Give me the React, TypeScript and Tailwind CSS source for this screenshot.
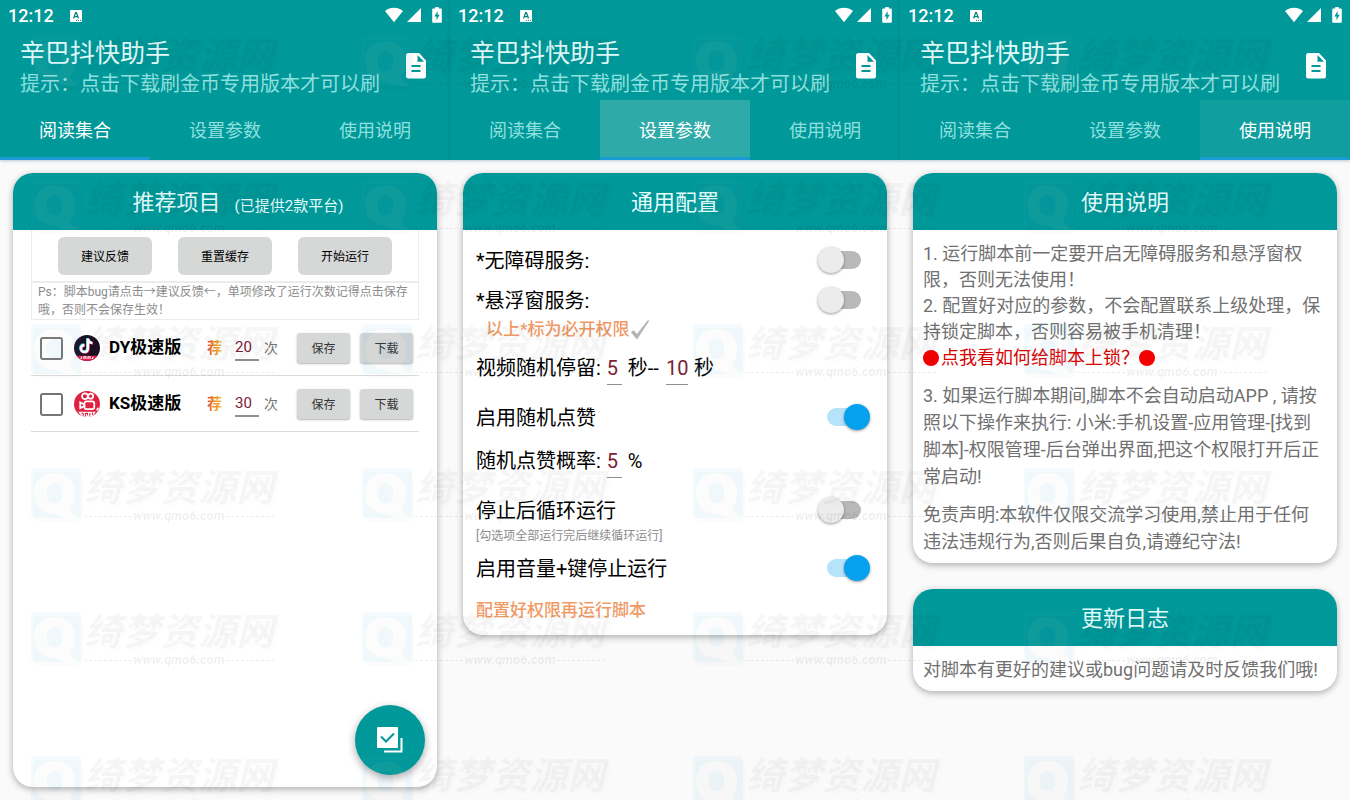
import type { ReactNode } from "react";

const TABS = ["阅读集合", "设置参数", "使用说明"];

function StatusBar() {
  return (
    <div className="flex h-8 items-center pb-px pl-2 pr-2 text-white">
      <span className="text-[18px] font-medium leading-8">12:12</span>
      <svg className="ml-4 h-3 w-3" viewBox="0 0 12 12" aria-hidden="true">
        <rect width="12" height="12" rx="1" fill="#fff" />
        <path d="M3.6 8.4 5.7 2.6h.7l2.1 5.8M4.4 6.6h3.3" fill="none" stroke="#067f80" strokeWidth="1.3" />
        <path d="M6 10.4h1M8 10.4h1M10 10.4h1" stroke="#067f80" strokeWidth="1" />
      </svg>
      <div className="ml-auto flex items-center pb-[2px]">
        <svg className="h-4 w-[18px]" viewBox="0 0 18 16" aria-hidden="true">
          <path d="M0 3.9C5.2-.3 12.800-.3 18 3.900L9 15.200z" fill="#fff" />
        </svg>
        <svg className="ml-1 h-4 w-[14px]" viewBox="0 0 14 16" aria-hidden="true">
          <path d="M14 1v14H0z" fill="#fff" />
        </svg>
        <svg className="ml-[11px] h-4 w-[10px]" viewBox="0 0 10 16" aria-hidden="true">
          <path d="M3.200 0h3.600v1.600H9c.5 0 .8.300.8.8V15c0 .5-.3.8-.8.8H1c-.5 0-.8-.3-.8-.8V2.400c0-.5.3-.8.8-.8h2.200z" fill="#fff" />
          <path d="M5.600 4 2.400 9.400h2.100v3.800L7.700 7.800H5.600z" fill="#009899" />
        </svg>
      </div>
    </div>
  );
}

function AppHeader({ active, tint }: { active: number; tint: string }) {
  return (
    <header className="bg-[#009899] shadow-[0_1px_3px_rgba(0,60,90,0.25)]">
      <StatusBar />
      <div className="flex h-[68px] items-center pl-5 pr-6">
        <div className="min-w-0 flex-1 pt-1">
          <h1 className="text-[25px] font-normal leading-8 text-[#e2fcfb]">辛巴抖快助手</h1>
          <p className="whitespace-nowrap text-[20px] leading-7 text-[#8fe0df]">提示：点击下载刷金币专用版本才可以刷</p>
        </div>
        <button type="button" aria-label="文档" className="shrink-0">
          <svg className="h-[26px] w-5" viewBox="0 0 20 26">
            <path
              fill="#fff"
              fillRule="evenodd"
              d="M2.500 0H13l7 7.500v15.500a2.500 2.500 0 0 1-2.500 2.500h-15A2.500 2.500 0 0 1 0 23V2.500A2.500 2.500 0 0 1 2.500 0zM11.500 2v6.800H18zM5.500 12v2h9v-2zM5.500 17v2h9v-2z"
            />
          </svg>
        </button>
      </div>
      <nav className="grid h-[60px] grid-cols-3">
        {TABS.map((tab, i) => (
          <button
            key={tab}
            type="button"
            className={
              "border-b-[3px] pt-[3px] text-[18px] " +
              (i === active ? "border-[#1a9bd6] text-white " + tint : "border-transparent text-[#8fe0df]")
            }
          >
            {tab}
          </button>
        ))}
      </nav>
    </header>
  );
}

function Card({ title, note, className = "", children }: { title: string; note?: string; className?: string; children: ReactNode }) {
  return (
    <section className={"relative rounded-[20px] bg-white shadow-[0_2px_7px_rgba(0,0,0,0.32)] " + className}>
      <div className="flex h-[57px] items-center justify-center gap-[14px] rounded-t-[20px] bg-[#009899] pt-[2px] text-[#e2fcfb]">
        <h2 className={note ? "pl-[26px] text-[22px] font-normal" : "text-[22px] font-normal"}>{title}</h2>
        {note && <span className="pt-2 text-[15px]">{note}</span>}
      </div>
      {children}
    </section>
  );
}

function DouyinLogo() {
  return (
    <svg className="h-[26px] w-[26px] shrink-0" viewBox="0 0 25 25" aria-hidden="true">
      <clipPath id="dy"><circle cx="12.500" cy="12.500" r="12.500" /></clipPath>
      <g clipPath="url(#dy)">
        <rect width="25" height="25" fill="#1c1024" />
        <path d="M0 20h25v5H0z" fill="#e0244e" />
        <path d="M6.500 23l1-2.200M9.500 23v-2h2v2M13.500 23v-2h2v2M17.500 23l1-2" fill="none" stroke="#fff" strokeWidth="1" />
        <g fill="none" strokeWidth="2.400">
          <path d="M12.800 3v9.500a3.400 3.400 0 1 1-3.400-3.400M12.800 3c.3 2.500 1.800 4 4.300 4.200" stroke="#35d6dc" />
          <path d="M14 4v9.500a3.400 3.400 0 1 1-3.400-3.400M14 4c.3 2.500 1.800 4 4.300 4.200" stroke="#f0375f" />
          <path d="M13.400 3.500V13a3.400 3.400 0 1 1-3.400-3.400M13.400 3.500c.3 2.500 1.800 4 4.300 4.200" stroke="#fff" />
        </g>
      </g>
    </svg>
  );
}

function KuaishouLogo() {
  return (
    <svg className="h-[26px] w-[26px] shrink-0" viewBox="0 0 25 25" aria-hidden="true">
      <clipPath id="ks"><circle cx="12.500" cy="12.500" r="12.500" /></clipPath>
      <g clipPath="url(#ks)">
        <rect width="25" height="25" fill="#e0203f" />
        <g fill="none" stroke="#fff" strokeWidth="1.700">
          <circle cx="10.500" cy="5" r="2.800" />
          <circle cx="16" cy="5" r="2.400" />
          <rect x="10" y="10" width="9.500" height="7.500" rx="2" />
          <path d="m10 13-4-2v5.500l4-2z" />
          <path d="M21.500 18c1 0 1.500-.8 1.500-2" />
        </g>
        <path d="M4 20h17L17 25H8z" fill="#fff" />
        <path d="M7 22l2-1M8.500 24l1-2.500M11 24.500v-3h2v2M15 24l.5-3M17.500 23l.5-2.500" fill="none" stroke="#e0203f" strokeWidth="1" />
      </g>
    </svg>
  );
}

function TaskRow({ logo, name, count }: { logo: ReactNode; name: string; count: string }) {
  return (
    <div className="flex h-14 items-center border-b border-[#dcdcdc] pl-[9px] pr-[6px] pt-px">
      <label className="flex items-center">
        <input
          type="checkbox"
          className="h-[23px] w-[23px] shrink-0 appearance-none rounded-[3px] border-2 border-[#757575] bg-transparent checked:bg-[#009899]"
        />
        <span className="ml-[11px]">{logo}</span>
        <span className="ml-[9px] w-[98px] whitespace-nowrap text-[17px] font-bold text-black">{name}</span>
      </label>
      <span className="bg-gradient-to-r from-[#e8452c] via-[#ee8a22] to-[#eec23a] bg-clip-text text-[15px] font-bold text-transparent">荐</span>
      <input
        type="text"
        aria-label={name + " 次数"}
        defaultValue={count}
        className="ml-[13px] h-[26px] w-6 border-b-2 border-[#8f8f8f] bg-transparent text-[15px] text-[#7d2034] outline-none"
      />
      <span className="ml-[5px] text-[14px] text-[#757575]">次</span>
      <div className="ml-auto flex gap-[10px]">
        {["保存", "下载"].map((label) => (
          <button
            key={label}
            type="button"
            className="h-[30px] w-[53px] rounded-[3px] bg-[#d6d7d7] pt-[2px] text-[12px] text-[#333] shadow-[0_1px_2px_rgba(0,0,0,0.3)]"
          >
            {label}
          </button>
        ))}
      </div>
    </div>
  );
}

function SwitchRow({ label, on = false, className = "" }: { label: string; on?: boolean; className?: string }) {
  return (
    <label className={"flex h-10 items-center justify-between pr-[13px] " + className}>
      <span className="pt-[2px]">{label}</span>
      <input
        type="checkbox"
        role="switch"
        defaultChecked={on}
        className="relative h-[18px] w-[34px] appearance-none rounded-full bg-[#b9b9b9] before:absolute before:-left-[9px] before:-top-1 before:h-[26px] before:w-[26px] before:rounded-full before:bg-[#ececec] before:shadow-[0_1px_3px_rgba(0,0,0,0.4)] checked:bg-[#b5e3fa] checked:before:left-[17px] checked:before:bg-[#06a1ee]"
      />
    </label>
  );
}

function NumberField({ value, label, className }: { value: string; label: string; className: string }) {
  return (
    <input
      type="text"
      aria-label={label}
      defaultValue={value}
      className={"h-[33px] border-b border-[#8f8f8f] bg-transparent text-[20px] text-[#7d2034] outline-none " + className}
    />
  );
}

const Q_SHAPE =
  "M23.500 5C11 5 3 13 3 25.500c0 11.500 7 18.500 17.500 20C28 46.500 31 50 38 50h9l-8.500-8.500C42 38 44 32 44 25.500 44 13 36 5 23.500 5zm0 10c5 0 8 4 8 10.500S28.500 35 23.500 35s-8-3-8-9.500S18.500 15 23.500 15z";

function Watermark() {
  return (
    <div className="flex h-36 w-[331px] shrink-0 pl-[31px] pt-9">
      <svg className="h-[58px] w-[53px] shrink-0" viewBox="0 0 53 58">
        <rect x="2" y="4" width="50" height="50" rx="5" fill="#000" opacity="0.01" />
        <path
          fill="#30b0e8"
          fillRule="evenodd"
          opacity="0.055"
          d={"M4 0h42a4 4 0 0 1 4 4v42a4 4 0 0 1-4 4H4a4 4 0 0 1-4-4V4a4 4 0 0 1 4-4z" + Q_SHAPE}
        />
        <path fill="#fff" fillRule="evenodd" opacity="0.05" d={Q_SHAPE} />
      </svg>
      <div className="w-[190px] text-black/[0.045]">
        <div className="whitespace-nowrap text-[38px] font-bold italic leading-10 [text-shadow:2px_3px_4px_rgba(0,0,0,0.015)]">绮梦资源网</div>
        <div className="flex items-center gap-px text-[13px] font-bold italic leading-4 text-black/[0.07]">
          <span className="flex-1 border-t border-dashed border-black/[0.07]" />
          www.qmo6.com
          <span className="flex-1 border-t border-dashed border-black/[0.07]" />
        </div>
      </div>
    </div>
  );
}

function WatermarkLayer() {
  return (
    <div aria-hidden="true" className="pointer-events-none absolute inset-0 z-20 overflow-hidden">
      {[0, 1, 2, 3, 4, 5].map((row) => (
        <div key={row} className="flex">
          {[0, 1, 2, 3].map((col) => (
            <Watermark key={col} />
          ))}
        </div>
      ))}
    </div>
  );
}

function Screen({ active, tint = "", children }: { active: number; tint?: string; children: ReactNode }) {
  return (
    <div className="flex min-w-0 flex-1 flex-col">
      <AppHeader active={active} tint={tint} />
      <main className="flex flex-1 flex-col px-[13px] pb-[13px] pt-[13px]">{children}</main>
    </div>
  );
}

export default function App() {
  return (
    <div className="relative flex min-h-screen overflow-hidden bg-[#fafafa] font-['Roboto','Noto_Sans_CJK_SC',sans-serif]" lang="zh-CN">
      <Screen active={0}>
        <Card title="推荐项目" note="(已提供2款平台)" className="flex-1">
          <div className="px-[18px]">
            <div className="flex h-[52px] items-center justify-center gap-[26px] border-x border-b border-[#ececec]">
              {["建议反馈", "重置缓存", "开始运行"].map((label) => (
                <button key={label} type="button" className="h-[38px] w-[94px] rounded-md bg-[#d6d7d7] pt-[2px] text-[12px] text-black">
                  {label}
                </button>
              ))}
            </div>
            <p className="border border-[#ececec] pl-[6px] text-[12px] leading-[18px] text-[#8c8c8c]">
              Ps：脚本bug请点击→建议反馈←，单项修改了运行次数记得点击保存哦，否则不会保存生效！
            </p>
            <TaskRow logo={<DouyinLogo />} name="DY极速版" count="20" />
            <TaskRow logo={<KuaishouLogo />} name="KS极速版" count="30" />
          </div>
          <button
            type="button"
            aria-label="全选"
            className="absolute bottom-3 right-3 flex h-[70px] w-[70px] items-center justify-center rounded-full bg-[#009899] shadow-[0_3px_8px_rgba(0,0,0,0.35)]"
          >
            <svg className="h-[26px] w-[26px]" viewBox="0 0 26 26">
              <rect x="0" y="0" width="21" height="21" rx="1" fill="#fff" />
              <path d="m4 9.500 5 5L17 6.500" fill="none" stroke="#009899" strokeWidth="2" />
              <path d="M24.500 11v13.500H7" fill="none" stroke="#fff" strokeWidth="2" />
            </svg>
          </button>
        </Card>
      </Screen>

      <Screen active={1} tint="bg-[#2eaaa9]">
        <Card title="通用配置">
          <div className="px-[13px] pb-[13px] pt-[10px] text-[20px] text-black">
            <SwitchRow label="*无障碍服务:" />
            <SwitchRow label="*悬浮窗服务:" />
            <p className="flex h-[18px] items-center pl-[10px] pt-[2px] text-[17px] font-medium text-[#f09a66]">
              以上*标为必开权限
              <svg className="h-5 w-5" viewBox="0 0 20 20" aria-hidden="true">
                <path d="M1 12.500 3.500 10l3.500 4L17.500.5h2L7 19.500z" fill="#b4b4b8" />
              </svg>
            </p>
            <div className="mt-[10px] flex h-10 items-center whitespace-pre">
              <span>视频随机停留:</span>
              <NumberField label="最短停留秒数" value="5" className="ml-[6px] w-[15px]" />
              <span className="ml-[6px]">秒--</span>
              <NumberField label="最长停留秒数" value="10" className="ml-[7px] w-[22px]" />
              <span className="ml-[6px]">秒</span>
            </div>
            <SwitchRow label="启用随机点赞" on className="mt-[9px]" />
            <div className="mt-1 flex h-10 items-center">
              <span>随机点赞概率:</span>
              <NumberField label="点赞概率" value="5" className="ml-[6px] w-[15px]" />
              <span className="ml-[6px]">%</span>
            </div>
            <SwitchRow label="停止后循环运行" className="mt-[9px]" />
            <p className="text-[12px] leading-3 text-[#8c8c8c]">[勾选项全部运行完后继续循环运行]</p>
            <SwitchRow label="启用音量+键停止运行" on className="mt-[6px]" />
            <p className="mt-[10px] text-[17px] font-medium leading-6 text-[#f09a66]">配置好权限再运行脚本</p>
          </div>
        </Card>
      </Screen>

      <Screen active={2} tint="bg-[#109e9e]">
        <Card title="使用说明">
          <div className="pb-2 pl-[10px] pr-[14px] pt-[11px] text-[18px] leading-[27px] text-[#707070]">
            <div className="leading-[26px]">
              <p>1. 运行脚本前一定要开启无障碍服务和悬浮窗权限，否则无法使用！</p>
              <p>2. 配置好对应的参数，不会配置联系上级处理，保持锁定脚本，否则容易被手机清理！</p>
              <a href="#lock" className="flex items-center text-[#d80000]">
                <span className="mr-[2px] h-4 w-4 rounded-full bg-[#f40000]" />
                点我看如何给脚本上锁？
                <span className="h-4 w-4 rounded-full bg-[#f40000]" />
              </a>
            </div>
            <p className="mt-[11px]">
              3. 如果运行脚本期间,脚本不会自动启动APP , 请按照以下操作来执行: 小米:手机设置-应用管理-[找到脚本]-权限管理-后台弹出界面,把这个权限打开后正常启动!
            </p>
            <p className="mt-[11px]">免责声明:本软件仅限交流学习使用,禁止用于任何违法违规行为,否则后果自负,请遵纪守法!</p>
          </div>
        </Card>
        <Card title="更新日志" className="mt-[26px]">
          <p className="px-[10px] pb-2 pt-[10px] text-[18px] leading-[27px] text-[#707070]">对脚本有更好的建议或bug问题请及时反馈我们哦!</p>
        </Card>
      </Screen>
      <WatermarkLayer />
    </div>
  );
}
